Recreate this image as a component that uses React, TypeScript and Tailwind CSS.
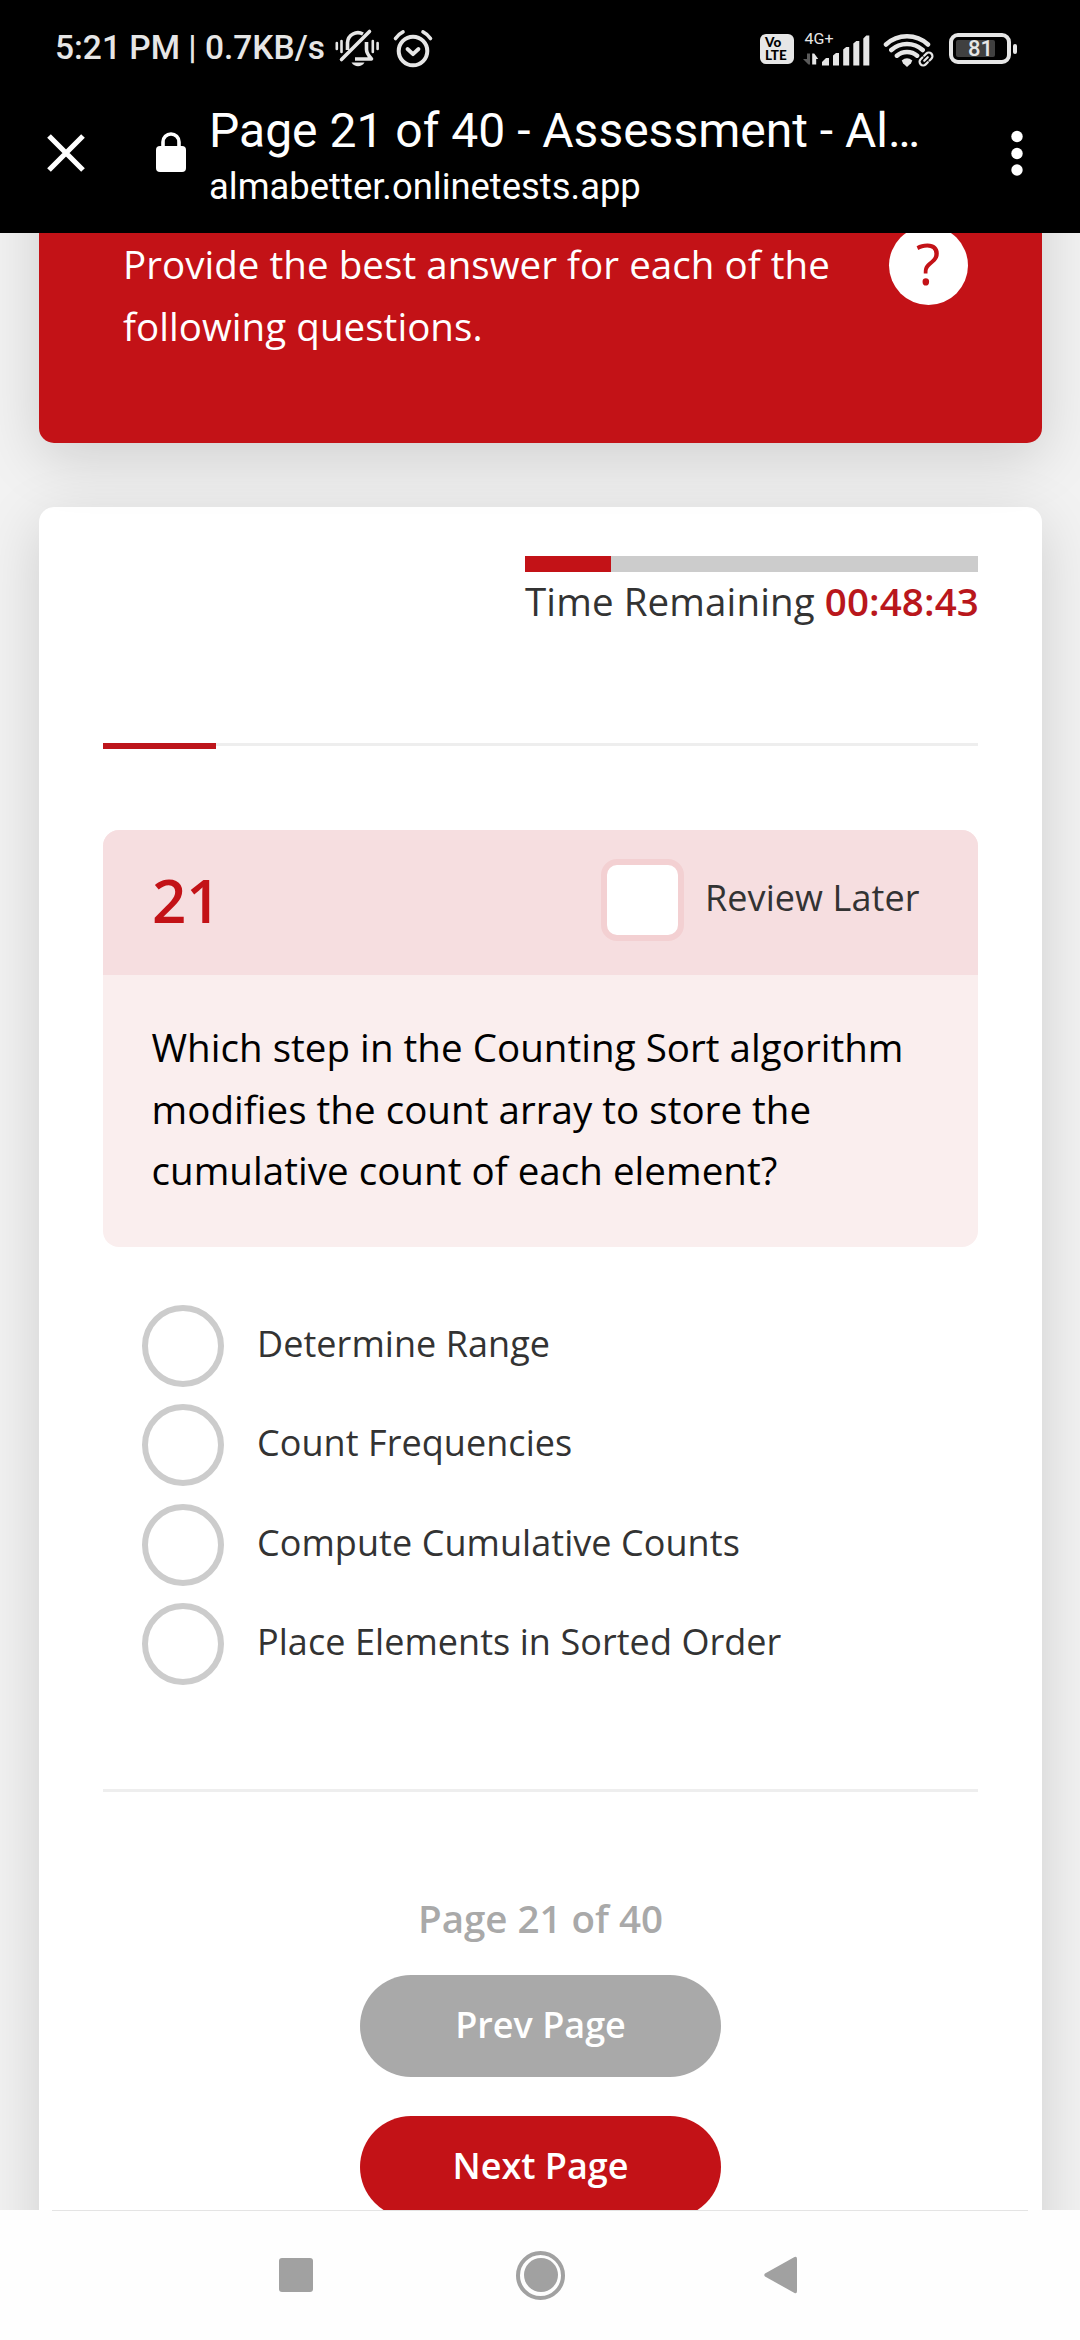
import type { ReactNode } from "react";

const options = [
  "Determine Range",
  "Count Frequencies",
  "Compute Cumulative Counts",
  "Place Elements in Sorted Order",
];

function MutedBell() {
  return (
    <svg width="46" height="42" viewBox="0 0 46 42" fill="none" stroke="#e6e6e6" strokeLinecap="round">
      <path d="M1.800 15v6M6.500 13v11M42.600 15v6M37.800 13v11" strokeWidth="2.600" />
      <path d="M12.500 22v-7.500a10.500 10.500 0 0 1 15.500 -8.500M31.500 14v7.500c0 3.500 1.500 5.500 5 9.500H20" strokeWidth="3.600" strokeLinejoin="round" strokeLinecap="butt" />
      <path d="M6.500 31.500L34.500 3.500" strokeWidth="3.600" />
      <path d="M16.500 34.500h13c-1.500 2.600-4 3.800-6.500 3.800s-5-1.200-6.500-3.800z" fill="#e6e6e6" stroke="none" />
    </svg>
  );
}

function AlarmClock() {
  return (
    <svg width="40" height="40" viewBox="0 0 40 40" fill="none" stroke="#e6e6e6" strokeLinecap="round">
      <circle cx="20" cy="22" r="14.300" strokeWidth="4" />
      <path d="M2.500 9.500Q5.500 5 10 2.800M37.500 9.500Q34.500 5 30 2.800" strokeWidth="3.600" />
      <path d="M14.500 20l5.500 5.200 5.500-5.200" strokeWidth="3.800" strokeLinejoin="round" />
    </svg>
  );
}

function VoLte() {
  return (
    <div className="flex h-[30px] w-[34px] flex-col justify-center rounded-[6px] bg-[#e6e6e6] pl-[5px] font-['Lato'] text-[13.500px] leading-[13px] font-black text-black">
      <span>Vo</span>
      <span>LTE</span>
    </div>
  );
}

function Signal() {
  return (
    <svg width="67" height="36" viewBox="0 0 67 36" fill="#e6e6e6">
      <text x="1.500" y="12.500" fontFamily="Roboto" fontSize="14.500" textLength="29" lengthAdjust="spacingAndGlyphs">4G+</text>
      <path d="M4 22.500h3v11h-1.500L0 28h4z" fill="#5a5a5a" />
      <path d="M9.200 33.500V22.500h2l4 5.500h-2v5.500z" />
      <path d="M19 34.500v-3.500l4-4h3v7.500zM30 34.500V24.500l3-2.500h3v12.500zM40.200 34.500V18.500l3-2.500h3v18.500zM50.300 34.500V12.500l3-2.500h3v24.500zM60.300 34.500V7.500l3-3h3v30z" />
    </svg>
  );
}

function WifiLink() {
  return (
    <svg width="52" height="38" viewBox="0 0 52 38" fill="none" stroke="#e6e6e6">
      <path d="M3 14.500a31 31 0 0 1 42 0M8.300 20a23.500 23.500 0 0 1 31.400 0M13.900 25.700a15.500 15.500 0 0 1 20.200 0" strokeWidth="4.500" strokeLinecap="round" />
      <path d="M18.700 30.500q5.300-4.300 10.600 0l-1.300 2.800-4 3.700-4-3.700z" fill="#e6e6e6" stroke="none" />
      <g transform="translate(43 29) rotate(-45)">
        <rect x="-10" y="-6" width="20" height="12" rx="5" fill="#000" stroke="none" />
        <path d="M-1.500 -3.600h-2.500a3.600 3.600 0 0 0 0 7.200h3M1.500 3.600h2.500a3.600 3.600 0 0 0 0-7.200h-3M-2.500 0h5" strokeWidth="2.200" strokeLinecap="round" />
      </g>
    </svg>
  );
}

function Battery() {
  return (
    <div className="flex items-center gap-[2px]">
      <div className="h-[31px] w-[62px] rounded-[9px] border-4 border-[#e6e6e6] p-[3px]">
        <div className="flex h-[17px] w-[39px] items-center justify-end rounded-[2px] bg-[#404040]">
          <span className="mr-[2px] font-[Roboto] text-[22px] leading-none font-medium text-[#e6e6e6]">81</span>
        </div>
      </div>
      <div className="h-[10px] w-[4px] rounded-full bg-[#e6e6e6]" />
    </div>
  );
}

function PageButton({ children, tone }: { children: ReactNode; tone: string }) {
  return (
    <button className={"flex h-[102px] w-[361px] items-center justify-center rounded-full pb-[1px] text-[36px] font-semibold text-white " + tone}>
      {children}
    </button>
  );
}

export default function App() {
  return (
    <div className="flex h-[2340px] w-[1080px] flex-col overflow-hidden bg-[#f2f2f2] font-['Open_Sans',sans-serif]">
      <header className="h-[233px] shrink-0 bg-black font-['Roboto',sans-serif] text-white">
        <div className="flex h-[97px] items-center pl-[55px] text-[#e6e6e6]">
          <span className="w-[280px] text-[33.500px] font-medium whitespace-nowrap">5:21 PM | 0.7KB/s</span>
          <MutedBell />
          <div className="ml-[12px]"><AlarmClock /></div>
          <div className="ml-[327px]"><VoLte /></div>
          <div className="ml-[9px]"><Signal /></div>
          <div className="ml-[13px]"><WifiLink /></div>
          <div className="ml-[14px]"><Battery /></div>
        </div>
        <div className="flex">
          <svg className="mt-[36px] ml-[46px]" width="40" height="40" viewBox="0 0 40 40" stroke="#fff" strokeWidth="5.200">
            <path d="M3 3L37 37M37 3L3 37" />
          </svg>
          <svg className="mt-[35px] ml-[70px]" width="30" height="40" viewBox="0 0 30 40">
            <path d="M7 16V10a8 8 0 0 1 16 0v6" fill="none" stroke="#fff" strokeWidth="3.600" />
            <rect x="0" y="14" width="30" height="26" rx="4" fill="#fff" />
          </svg>
          <div className="mt-[4px] ml-[23px] w-[740px] whitespace-nowrap">
            <p className="text-[48px] leading-[60px]">Page 21 of 40 - Assessment - Al…</p>
            <p className="mt-[4px] text-[36.400px] leading-[44px]">almabetter.onlinetests.app</p>
          </div>
          <svg className="mt-[33px] ml-[62px]" width="12" height="48" viewBox="0 0 12 48" fill="#fff">
            <circle cx="6" cy="6.500" r="5.700" />
            <circle cx="6" cy="23.500" r="5.700" />
            <circle cx="6" cy="40" r="5.700" />
          </svg>
        </div>
      </header>

      <main className="h-[1977px] shrink-0 overflow-hidden px-[39px]">
        <div className="flow-root">
          <section className="relative z-10 -mt-[150px] flex h-[360px] w-[1003px] items-start rounded-[15px] bg-[#c31217] shadow-[0_15px_60px_rgba(0,0,0,0.15)]">
            <p className="mt-[151px] ml-[84px] w-[765.500px] pr-[40px] text-[38.500px] leading-[61.600px] tracking-[0.050px] text-white">
              Provide the best answer for each of the following questions.
            </p>
            <div className="mt-[142.500px] flex size-[79px] items-center justify-center rounded-full bg-white pb-[3px] text-[57px] leading-none text-[#c31217]">
              ?
            </div>
          </section>
        </div>

        <section className="mt-[64px] h-[1800px] w-[1003px] rounded-[15px] bg-white px-[64px] pt-[49px] shadow-[0_15px_60px_rgba(0,0,0,0.15)]">
          <div className="ml-auto w-[453px]">
            <div className="h-[16px] bg-[#cccccc]">
              <div className="h-full w-[86px] bg-[#c31217]" />
            </div>
            <p className="mt-[4px] text-[38.500px] leading-[50px] tracking-[0.110px] whitespace-nowrap text-[#333]">
              Time Remaining <span className="font-semibold text-[#b9171c]">00:48:43</span>
            </p>
          </div>

          <div className="mt-[117px] h-[6px]">
            <div className="h-[3px] bg-[#eeeeee]">
              <div className="h-[6px] w-[113px] bg-[#bd151b]" />
            </div>
          </div>

          <article className="mt-[81px] overflow-hidden rounded-[16px] bg-[#faeeee]">
            <div className="flex h-[145px] items-center bg-[#f6dee0] pb-[5px] pl-[49px]">
              <h2 className="w-[449px] text-[60px] leading-none font-semibold text-[#c31217]">21</h2>
              <div className="h-[82px] w-[83px] rounded-[16px] border-[6px] border-[#f3d0d2] bg-white" />
              <span className="mb-[4px] ml-[21px] text-[36px] tracking-[0.080px] text-[#333]">Review Later</span>
            </div>
            <p className="h-[272px] pt-[42px] pl-[48.500px] text-[38.500px] leading-[61.600px] tracking-[0.040px] whitespace-nowrap text-black">
              Which step in the Counting Sort algorithm
              <br />
              modifies the count array to store the
              <br />
              cumulative count of each element?
            </p>
          </article>

          <div className="mt-[58px] flex flex-col gap-[17.330px] pl-[39px]">
            {options.map((label) => (
              <label key={label} className="flex h-[82px] items-center gap-[33px]">
                <span className="size-[82px] rounded-full border-[6px] border-[#cccccc]" />
                <span className="mb-[4px] text-[36px] tracking-[0.060px] text-[#333]">{label}</span>
              </label>
            ))}
          </div>

          <div className="mt-[104px] h-[3px] bg-[#eeeeee]" />

          <div className="mt-[100px] flex flex-col items-center">
            <p className="text-[38.500px] leading-[52px] font-semibold text-[#a9a9a9]">Page 21 of 40</p>
            <div className="mt-[31px] flex flex-col gap-[39px]">
              <PageButton tone="bg-[#a9a9a9]">Prev Page</PageButton>
              <PageButton tone="bg-[#c31217]">Next Page</PageButton>
            </div>
          </div>
        </section>
      </main>

      <nav className="flex h-[130px] shrink-0 flex-col bg-[#fefefe]">
        <div className="mx-[52px] h-px bg-[#e4e4e4]" />
        <div className="flex h-[128px] items-center pl-[279px]">
          <div className="size-[34px] rounded-[3px] bg-[#a1a1a1]" />
          <div className="ml-[203px] flex size-[49px] items-center justify-center rounded-full border-4 border-[#a1a1a1]">
            <div className="size-[34px] rounded-full bg-[#a1a1a1]" />
          </div>
          <svg className="ml-[199px]" width="34" height="38" viewBox="0 0 34 38" fill="#a1a1a1">
            <path d="M1 17.500L30.500 1Q33 0 33 3v32q0 3-2.500 2L1 20.500Q-.5 19 1 17.500z" />
          </svg>
        </div>
      </nav>
    </div>
  );
}
